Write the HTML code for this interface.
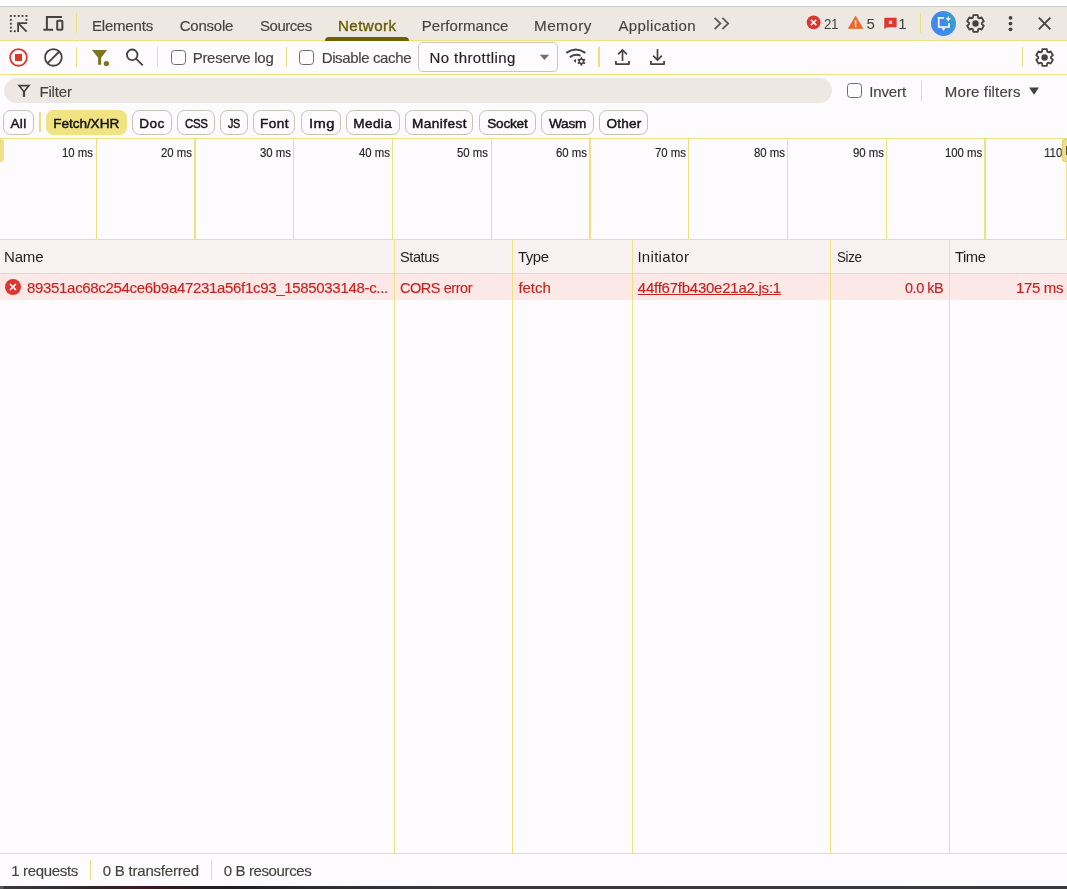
<!DOCTYPE html>
<html lang="en">
<head>
<meta charset="utf-8">
<title>DevTools - Network</title>
<style>
*{box-sizing:border-box;margin:0;padding:0}
html,body{width:1067px;height:889px;overflow:hidden;background:#fdfbfd}
body{position:relative;font-family:"Liberation Sans",sans-serif;font-size:15px;color:#45433f}
.abs{position:absolute}
.t{position:absolute;white-space:nowrap;line-height:20px;height:20px;-webkit-text-stroke:0.15px currentColor}
.hl{position:absolute;left:0;width:1067px;height:1px;background:#efe27c}
.vl{position:absolute;width:1px;background:#efe27c}
.sep{position:absolute;width:1px;background:#eedf7c}
#topstrip{left:0;top:0;width:1067px;height:6px;background:#ffffff}
#topline{left:0;top:6px;width:1067px;height:1px;background:#cbcdcc}
#tabbar{left:0;top:7px;width:1067px;height:33px;background:#ede8e2}
#tabul{left:325px;top:37px;width:84px;height:4px;background:#6c6200;border-radius:4px 4px 0 0}
.cb{position:absolute;width:15px;height:15px;border:1.4px solid #6f6e6b;border-radius:3.5px;background:#fdfbfd}
#select{left:418px;top:42px;width:140px;height:30px;border:1px solid #cbc6ba;border-radius:5px;background:#fdfbfd}
#filter{left:4px;top:78px;width:828px;height:25px;border-radius:12.5px;background:#ede8e2}
.chip{position:absolute;top:110px;height:25px;border:1px solid #c6c1b3;border-radius:7.5px;background:#fdfbfd}
.chip.sel{background:#f1e282;border-color:#f1e282}
#thead{left:0;top:240px;width:1067px;height:33px;background:#f7f1f1}
#row{left:0;top:274px;width:1067px;height:26px;background:#fce8e7}
#dark{left:0;top:886px;width:1067px;height:3px;background:linear-gradient(90deg,#58585c 0,#58585c 3px,#3a3a3e 4px,#30262a 90px,#3d1a1f 140px,#2a1c20 190px,#1f1f23 230px,#2e2e31 330px,#39393b 450px,#3b3b3d 1067px)}
</style>
</head>
<body>
<div id="topstrip" class="abs"></div>
<div id="topline" class="abs"></div>
<div id="tabbar" class="abs"></div>
<div class="hl" style="top:40px"></div>
<div id="tabul" class="abs"></div>
<div class="sep" style="left:76px;top:13px;height:20px"></div>
<div class="sep" style="left:920px;top:13px;height:20px"></div>
<div class="hl" style="top:74px"></div>
<div class="sep" style="left:76px;top:47px;height:20px"></div>
<div class="sep" style="left:157px;top:47px;height:20px"></div>
<div class="sep" style="left:286px;top:47px;height:20px"></div>
<div class="sep" style="left:598px;top:47px;height:20px;width:2px"></div>
<div class="sep" style="left:1022px;top:47px;height:20px"></div>
<div class="cb" style="left:171px;top:50px"></div>
<div class="cb" style="left:299px;top:50px"></div>
<div id="select" class="abs"></div>
<div id="filter" class="abs"></div>
<div class="cb" style="left:847px;top:83px"></div>
<div class="sep" style="left:921px;top:81px;height:20px"></div>
<div class="sep" style="left:39px;top:112px;height:20px;width:2px"></div>
<div class="chip" style="left:3px;width:31px"></div>
<div class="chip sel" style="left:46px;width:81px"></div>
<div class="chip" style="left:132px;width:40px"></div>
<div class="chip" style="left:177px;width:38px"></div>
<div class="chip" style="left:220px;width:28px"></div>
<div class="chip" style="left:253px;width:42px"></div>
<div class="chip" style="left:301px;width:40px"></div>
<div class="chip" style="left:346px;width:54px"></div>
<div class="chip" style="left:405px;width:68px"></div>
<div class="chip" style="left:479px;width:57px"></div>
<div class="chip" style="left:541px;width:53px"></div>
<div class="chip" style="left:599px;width:49px"></div>
<div class="hl" style="top:138px"></div>
<div class="vl" style="left:96px;width:1px;top:139px;height:100px"></div>
<div class="vl" style="left:194px;width:2px;top:139px;height:100px"></div>
<div class="vl" style="left:293px;width:1px;top:139px;height:100px"></div>
<div class="vl" style="left:392px;width:1px;top:139px;height:100px"></div>
<div class="vl" style="left:491px;width:1px;top:139px;height:100px"></div>
<div class="vl" style="left:589px;width:2px;top:139px;height:100px"></div>
<div class="vl" style="left:688px;width:1px;top:139px;height:100px"></div>
<div class="vl" style="left:787px;width:1px;top:139px;height:100px"></div>
<div class="vl" style="left:886px;width:1px;top:139px;height:100px"></div>
<div class="vl" style="left:984px;width:2px;top:139px;height:100px"></div>
<div id="thead" class="abs"></div>
<div class="hl" style="top:239px"></div>
<div class="hl" style="top:273px"></div>
<div id="row" class="abs"></div>
<div class="vl" style="left:394px;top:239px;height:614px"></div>
<div class="vl" style="left:512px;top:239px;height:614px"></div>
<div class="vl" style="left:632px;top:239px;height:614px"></div>
<div class="vl" style="left:830px;top:239px;height:614px"></div>
<div class="vl" style="left:949px;top:239px;height:614px"></div>
<div class="hl" style="top:853px"></div>
<div class="sep" style="left:90px;top:860px;height:20px"></div>
<div class="sep" style="left:211px;top:860px;height:20px"></div>
<div id="dark" class="abs"></div>
<div class="abs" style="left:0;top:0;width:1067px;height:889px;will-change:transform">
<span class="t" style="left:91.90px;top:16px;font-size:15px;color:#45433f;letter-spacing:-0.175px;">Elements</span>
<span class="t" style="left:179.70px;top:16px;font-size:15px;color:#45433f;letter-spacing:-0.232px;">Console</span>
<span class="t" style="left:259.70px;top:16px;font-size:15px;color:#45433f;letter-spacing:-0.450px;transform:scaleX(0.9976);transform-origin:0 0;">Sources</span>
<span class="t" style="left:337.69px;top:16px;font-size:15px;color:#665c00;letter-spacing:0.450px;transform:scaleX(1.0068);transform-origin:0 0;-webkit-text-stroke:0.35px #665c00;">Network</span>
<span class="t" style="left:421.70px;top:16px;font-size:15px;color:#45433f;letter-spacing:0.077px;">Performance</span>
<span class="t" style="left:533.98px;top:16px;font-size:15px;color:#45433f;letter-spacing:0.450px;transform:scaleX(1.0157);transform-origin:0 0;">Memory</span>
<span class="t" style="left:618.40px;top:16px;font-size:15px;color:#45433f;letter-spacing:0.386px;">Application</span>
<span class="t" style="left:823.80px;top:14px;font-size:15px;color:#45433f;letter-spacing:-0.450px;transform:scaleX(0.8935);transform-origin:0 0;-webkit-text-stroke:0;">21</span>
<span class="t" style="left:866.40px;top:14px;font-size:15px;color:#45433f;letter-spacing:0.000px;-webkit-text-stroke:0;">5</span>
<span class="t" style="left:898.30px;top:14px;font-size:15px;color:#45433f;letter-spacing:0.000px;-webkit-text-stroke:0;">1</span>
<span class="t" style="left:192.70px;top:48px;font-size:15px;color:#45433f;letter-spacing:-0.288px;">Preserve log</span>
<span class="t" style="left:321.70px;top:48px;font-size:15px;color:#45433f;letter-spacing:-0.365px;">Disable cache</span>
<span class="t" style="left:429.50px;top:48px;font-size:15px;color:#1f1f1f;letter-spacing:0.414px;">No throttling</span>
<span class="t" style="left:39.40px;top:82px;font-size:15px;color:#45433f;letter-spacing:-0.147px;">Filter</span>
<span class="t" style="left:869.30px;top:82px;font-size:15px;color:#45433f;letter-spacing:-0.149px;">Invert</span>
<span class="t" style="left:944.80px;top:82px;font-size:15px;color:#45433f;letter-spacing:0.138px;">More filters</span>
<span class="t" style="left:3.95px;top:247px;font-size:15px;color:#1f1f1f;letter-spacing:-0.140px;-webkit-text-stroke:0;">Name</span>
<span class="t" style="left:400.30px;top:247px;font-size:15px;color:#1f1f1f;letter-spacing:-0.450px;transform:scaleX(0.9730);transform-origin:0 0;-webkit-text-stroke:0;">Status</span>
<span class="t" style="left:518.40px;top:247px;font-size:15px;color:#1f1f1f;letter-spacing:-0.450px;transform:scaleX(0.9926);transform-origin:0 0;-webkit-text-stroke:0;">Type</span>
<span class="t" style="left:637.40px;top:247px;font-size:15px;color:#1f1f1f;letter-spacing:0.301px;-webkit-text-stroke:0;">Initiator</span>
<span class="t" style="left:836.70px;top:247px;font-size:15px;color:#1f1f1f;letter-spacing:-0.450px;transform:scaleX(0.8950);transform-origin:0 0;-webkit-text-stroke:0;">Size</span>
<span class="t" style="left:955.40px;top:247px;font-size:15px;color:#1f1f1f;letter-spacing:-0.450px;transform:scaleX(0.9844);transform-origin:0 0;-webkit-text-stroke:0;">Time</span>
<span class="t" style="left:27.00px;top:278px;font-size:15px;color:#c5221f;letter-spacing:-0.319px;">89351ac68c254ce6b9a47231a56f1c93_1585033148-c...</span>
<span class="t" style="left:400.30px;top:278px;font-size:15px;color:#c5221f;letter-spacing:-0.450px;transform:scaleX(0.9650);transform-origin:0 0;">CORS error</span>
<span class="t" style="left:518.40px;top:278px;font-size:15px;color:#c5221f;letter-spacing:-0.019px;">fetch</span>
<span class="t" style="left:637.80px;top:278px;font-size:15px;color:#c5221f;letter-spacing:-0.242px;text-decoration:underline;text-underline-offset:1px;">44ff67fb430e21a2.js:1</span>
<span class="t" style="left:904.60px;top:278px;font-size:15px;color:#c5221f;letter-spacing:-0.450px;transform:scaleX(0.9610);transform-origin:0 0;">0.0 kB</span>
<span class="t" style="left:1016.00px;top:278px;font-size:15px;color:#c5221f;letter-spacing:-0.338px;">175 ms</span>
<span class="t" style="left:11.20px;top:861px;font-size:15px;color:#45433f;letter-spacing:-0.327px;">1 requests</span>
<span class="t" style="left:102.70px;top:861px;font-size:15px;color:#45433f;letter-spacing:-0.205px;">0 B transferred</span>
<span class="t" style="left:223.80px;top:861px;font-size:15px;color:#45433f;letter-spacing:-0.387px;">0 B resources</span>
<span class="t" style="left:62.37px;top:143px;font-size:12.5px;color:#1f1f1f;letter-spacing:-0.050px;transform:scaleX(0.9110);transform-origin:0 0;">10 ms</span>
<span class="t" style="left:161.14px;top:143px;font-size:12.5px;color:#1f1f1f;letter-spacing:-0.050px;transform:scaleX(0.9110);transform-origin:0 0;">20 ms</span>
<span class="t" style="left:259.91px;top:143px;font-size:12.5px;color:#1f1f1f;letter-spacing:-0.050px;transform:scaleX(0.9110);transform-origin:0 0;">30 ms</span>
<span class="t" style="left:358.68px;top:143px;font-size:12.5px;color:#1f1f1f;letter-spacing:-0.050px;transform:scaleX(0.9110);transform-origin:0 0;">40 ms</span>
<span class="t" style="left:457.45px;top:143px;font-size:12.5px;color:#1f1f1f;letter-spacing:-0.050px;transform:scaleX(0.9110);transform-origin:0 0;">50 ms</span>
<span class="t" style="left:556.22px;top:143px;font-size:12.5px;color:#1f1f1f;letter-spacing:-0.050px;transform:scaleX(0.9110);transform-origin:0 0;">60 ms</span>
<span class="t" style="left:654.99px;top:143px;font-size:12.5px;color:#1f1f1f;letter-spacing:-0.050px;transform:scaleX(0.9110);transform-origin:0 0;">70 ms</span>
<span class="t" style="left:753.76px;top:143px;font-size:12.5px;color:#1f1f1f;letter-spacing:-0.050px;transform:scaleX(0.9110);transform-origin:0 0;">80 ms</span>
<span class="t" style="left:852.53px;top:143px;font-size:12.5px;color:#1f1f1f;letter-spacing:-0.050px;transform:scaleX(0.9110);transform-origin:0 0;">90 ms</span>
<span class="t" style="left:945.00px;top:143px;font-size:12.5px;color:#1f1f1f;letter-spacing:-0.050px;transform:scaleX(0.9113);transform-origin:0 0;">100 ms</span>
<span class="t" style="left:1044.27px;top:143px;font-size:12.5px;color:#1f1f1f;letter-spacing:-0.050px;transform:scaleX(0.9200);transform-origin:0 0;">110 ms</span>
<span class="t" style="left:10.50px;top:114px;font-size:13.6px;color:#141414;letter-spacing:0.306px;-webkit-text-stroke:0.45px #141414;">All</span>
<span class="t" style="left:53.20px;top:114px;font-size:13.6px;color:#141414;letter-spacing:-0.057px;-webkit-text-stroke:0.45px #141414;">Fetch/XHR</span>
<span class="t" style="left:139.20px;top:114px;font-size:13.6px;color:#141414;letter-spacing:0.411px;-webkit-text-stroke:0.45px #141414;">Doc</span>
<span class="t" style="left:184.70px;top:114px;font-size:13.6px;color:#141414;letter-spacing:-0.450px;transform:scaleX(0.8449);transform-origin:0 0;-webkit-text-stroke:0.45px #141414;">CSS</span>
<span class="t" style="left:227.80px;top:114px;font-size:13.6px;color:#141414;letter-spacing:-0.450px;transform:scaleX(0.7950);transform-origin:0 0;-webkit-text-stroke:0.45px #141414;">JS</span>
<span class="t" style="left:260.00px;top:114px;font-size:13.6px;color:#141414;letter-spacing:0.425px;-webkit-text-stroke:0.45px #141414;">Font</span>
<span class="t" style="left:308.62px;top:114px;font-size:13.6px;color:#141414;letter-spacing:0.450px;transform:scaleX(1.0818);transform-origin:0 0;-webkit-text-stroke:0.45px #141414;">Img</span>
<span class="t" style="left:353.30px;top:114px;font-size:13.6px;color:#141414;letter-spacing:0.359px;-webkit-text-stroke:0.45px #141414;">Media</span>
<span class="t" style="left:412.10px;top:114px;font-size:13.6px;color:#141414;letter-spacing:0.443px;-webkit-text-stroke:0.45px #141414;">Manifest</span>
<span class="t" style="left:487.20px;top:114px;font-size:13.6px;color:#141414;letter-spacing:-0.196px;-webkit-text-stroke:0.45px #141414;">Socket</span>
<span class="t" style="left:549.00px;top:114px;font-size:13.6px;color:#141414;letter-spacing:-0.228px;-webkit-text-stroke:0.45px #141414;">Wasm</span>
<span class="t" style="left:606.60px;top:114px;font-size:13.6px;color:#141414;letter-spacing:0.182px;-webkit-text-stroke:0.45px #141414;">Other</span>
</div>
<div class="abs" style="left:0;top:139px;width:4px;height:23px;background:#efe183;border-radius:0 3px 3px 0"></div>
<div class="abs" style="left:1062px;top:139px;width:6px;height:23px;background:#efe183;border:1px solid #ddd072;border-right:0;border-radius:3px 0 0 3px"></div>
<div class="abs" style="left:1066px;top:146px;width:1px;height:9px;background:#5a5530"></div>
<div class="vl" style="left:1066px;top:162px;height:77px"></div>
<svg class="abs" style="left:0;top:0;pointer-events:none" width="1067" height="889" viewBox="0 0 1067 889">
<!-- inspect icon -->
<g fill="#45433f">
<rect x="9.9" y="15" width="1.9" height="1.9"/><rect x="13.8" y="15" width="1.9" height="1.9"/><rect x="17.7" y="15" width="1.9" height="1.9"/><rect x="21.6" y="15" width="1.9" height="1.9"/><rect x="25.5" y="15" width="1.9" height="1.9"/>
<rect x="9.9" y="18.9" width="1.9" height="1.9"/><rect x="9.9" y="22.8" width="1.9" height="1.9"/><rect x="9.9" y="26.7" width="1.9" height="1.9"/><rect x="9.9" y="30.2" width="1.9" height="1.9"/>
<rect x="13.8" y="30.2" width="1.9" height="1.9"/><rect x="25.5" y="18.9" width="1.9" height="1.9"/>
</g>
<path d="M27.2 23.1H18.1V32 M18.4 23.4L26.6 31.6" fill="none" stroke="#45433f" stroke-width="1.8"/>
<!-- device icon -->
<path d="M62 16.9H46.9V29.8 M43.4 29.8H53.2" fill="none" stroke="#45433f" stroke-width="2"/>
<rect x="57.2" y="20.8" width="5.2" height="9" rx="0.8" fill="none" stroke="#45433f" stroke-width="2"/>
<!-- chevrons -->
<path d="M714.6 17.8L720.4 23.5L714.6 29.2 M722.4 17.8L728.2 23.5L722.4 29.2" fill="none" stroke="#5e5b54" stroke-width="1.8"/>
<!-- error badge -->
<circle cx="813.6" cy="22.4" r="6.9" fill="#dc362e"/>
<path d="M810.9 19.7L816.3 25.1M816.3 19.7L810.9 25.1" stroke="#fff" stroke-width="1.6" fill="none"/>
<!-- warning -->
<path d="M855.6 16.2L862.8 28.4H848.4Z" fill="#e8692a" stroke="#e8692a" stroke-width="0.8" stroke-linejoin="round"/>
<rect x="854.9" y="20.2" width="1.5" height="4.4" fill="#fff"/><rect x="854.9" y="25.6" width="1.5" height="1.5" fill="#fff"/>
<!-- issue flag -->
<path d="M884.3 18.4Q884.3 17.7 885 17.7H895.9Q896.6 17.7 896.6 18.4V26.5Q896.6 27.2 895.9 27.2H886.6L884.3 29.4Z" fill="#dc362e"/>
<path d="M889 20.9L892 23.9M892 20.9L889 23.9" stroke="#fff" stroke-width="1.2" fill="none"/>
<!-- AI button -->
<defs><linearGradient id="ai" x1="0" y1="0.6" x2="1" y2="0.3"><stop offset="0" stop-color="#4285f4"/><stop offset="0.55" stop-color="#3c8dea"/><stop offset="1" stop-color="#2ea6c4"/></linearGradient></defs>
<circle cx="943.5" cy="23.5" r="12.5" fill="url(#ai)"/>
<path d="M944 17.8H938.7V27H949V23.1" fill="none" stroke="#fff" stroke-width="1.7"/>
<path d="M941.4 27.8H945.7L943.55 30.8Z" fill="#fff"/>
<path d="M948.3 15.9Q948.7 18.4 951.2 18.8Q948.7 19.2 948.3 21.7Q947.9 19.2 945.4 18.8Q947.9 18.4 948.3 15.9Z" fill="#fff"/>
<!-- gear top -->
<path d="M978.10 17.65 L977.73 15.19 L973.27 15.19 L972.90 17.65 L971.74 18.32 L969.42 17.42 L967.19 21.27 L969.14 22.83 L969.14 24.17 L967.19 25.73 L969.42 29.58 L971.74 28.68 L972.90 29.35 L973.27 31.81 L977.73 31.81 L978.10 29.35 L979.26 28.68 L981.58 29.58 L983.81 25.73 L981.86 24.17 L981.86 22.83 L983.81 21.27 L981.58 17.42 L979.26 18.32Z" fill="none" stroke="#45433f" stroke-width="1.8" stroke-linejoin="round"/>
<circle cx="975.5" cy="23.5" r="3.2" fill="#45433f"/>
<!-- kebab -->
<circle cx="1010.5" cy="17.8" r="1.9" fill="#45433f"/><circle cx="1010.5" cy="23.55" r="1.9" fill="#45433f"/><circle cx="1010.5" cy="29.3" r="1.9" fill="#45433f"/>
<!-- close -->
<path d="M1038.8 17.7L1050.4 29.3M1050.4 17.7L1038.8 29.3" stroke="#45433f" stroke-width="1.8" fill="none"/>

<!-- record/stop -->
<circle cx="18.5" cy="57.4" r="8.35" fill="none" stroke="#dc362e" stroke-width="1.8"/>
<rect x="15" y="54" width="7" height="7" fill="#dc362e"/>
<!-- clear -->
<circle cx="53.4" cy="57.4" r="8.35" fill="none" stroke="#45433f" stroke-width="1.8"/>
<path d="M47.5 63.3L59.3 51.5" stroke="#45433f" stroke-width="1.8" fill="none"/>
<!-- funnel -->
<path d="M91.9 50H107.1L101.1 57.8V64.8H98.1V57.8Z" fill="#7d7423"/>
<circle cx="106.4" cy="63.5" r="2.6" fill="#7d7423"/>
<!-- search -->
<circle cx="132.2" cy="54.8" r="5.3" fill="none" stroke="#45433f" stroke-width="1.8"/>
<path d="M136 58.6L142.8 65.4" stroke="#45433f" stroke-width="1.8" fill="none"/>
<!-- dropdown arrow -->
<path d="M539.8 54.8H549.2L544.5 60Z" fill="#6e6e6e"/>
<!-- wifi -->
<path d="M566.3 52.9Q575.8 45.9 585.3 52.9" fill="none" stroke="#45433f" stroke-width="2"/>
<path d="M569.9 57.1Q574.6 53.4 580.6 55.6" fill="none" stroke="#45433f" stroke-width="2"/>
<path d="M573.4 60.4L576 59V63Z" fill="#45433f"/>
<path d="M582.43 58.58 L582.07 57.15 L580.73 57.15 L580.37 58.58 L579.47 59.10 L578.06 58.69 L577.39 59.86 L578.45 60.88 L578.45 61.92 L577.39 62.94 L578.06 64.11 L579.47 63.70 L580.37 64.22 L580.73 65.65 L582.07 65.65 L582.43 64.22 L583.33 63.70 L584.74 64.11 L585.41 62.94 L584.35 61.92 L584.35 60.88 L585.41 59.86 L584.74 58.69 L583.33 59.10Z M580.0 61.4a1.4 1.4 0 1 0 2.8 0a1.4 1.4 0 1 0 -2.8 0Z" fill="#45433f" fill-rule="evenodd"/>
<!-- upload -->
<path d="M615.9 61V64.1H629V61" fill="none" stroke="#45433f" stroke-width="1.8" stroke-linejoin="round"/>
<path d="M622.5 61V50 M618.1 54.3L622.5 49.9L626.9 54.3" fill="none" stroke="#45433f" stroke-width="1.7"/>
<!-- download -->
<path d="M650.9 61V64.1H664.1V61" fill="none" stroke="#45433f" stroke-width="1.8" stroke-linejoin="round"/>
<path d="M657.5 48.9V60 M653.1 55.6L657.5 60L661.9 55.6" fill="none" stroke="#45433f" stroke-width="1.7"/>
<!-- gear toolbar -->
<path d="M1047.20 51.65 L1046.83 49.19 L1042.37 49.19 L1042.00 51.65 L1040.84 52.32 L1038.52 51.42 L1036.29 55.27 L1038.24 56.83 L1038.24 58.17 L1036.29 59.73 L1038.52 63.58 L1040.84 62.68 L1042.00 63.35 L1042.37 65.81 L1046.83 65.81 L1047.20 63.35 L1048.36 62.68 L1050.68 63.58 L1052.91 59.73 L1050.96 58.17 L1050.96 56.83 L1052.91 55.27 L1050.68 51.42 L1048.36 52.32Z" fill="none" stroke="#45433f" stroke-width="1.8" stroke-linejoin="round"/>
<circle cx="1044.6" cy="57.5" r="3.2" fill="#45433f"/>

<!-- filter funnel outline -->
<path d="M19 85.6H29L24 91.8Z" fill="none" stroke="#45433f" stroke-width="1.6" stroke-linejoin="miter"/>
<rect x="22.9" y="90.5" width="2.2" height="6.4" fill="#45433f"/>
<!-- more filters arrow -->
<path d="M1029 87.6H1039L1034 94.8Z" fill="#45433f"/>

<!-- row error icon -->
<circle cx="13" cy="287" r="8" fill="#dc362e"/>
<path d="M10 284L16 290M16 284L10 290" stroke="#fff" stroke-width="1.7" fill="none"/>
</svg>

</body>
</html>
